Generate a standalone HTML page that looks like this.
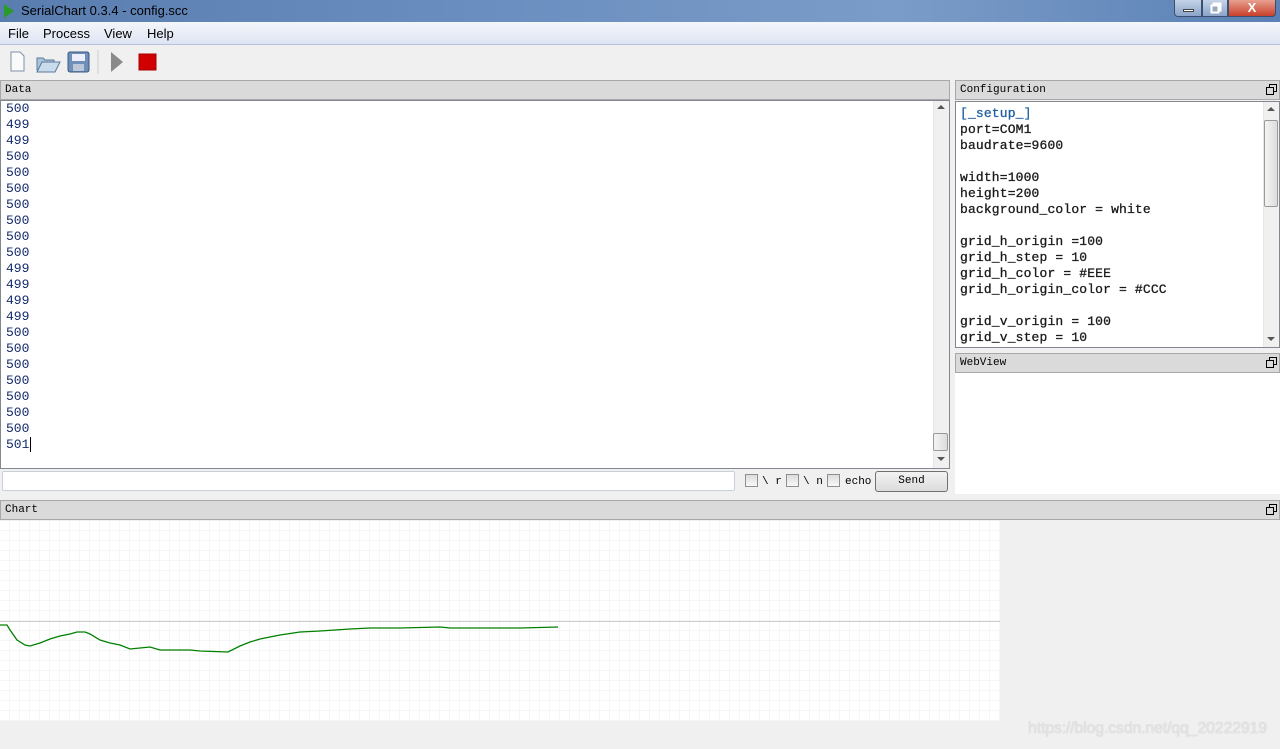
<!DOCTYPE html>
<html><head><meta charset="utf-8"><style>
*{margin:0;padding:0;box-sizing:border-box}
body{width:1280px;height:749px;overflow:hidden;background:#f0f0f0;font-family:"Liberation Sans",sans-serif;position:relative}
.abs{position:absolute}
.mono{font-family:"Liberation Mono",monospace;font-size:13px;line-height:16px}
.hdr{background:#dadada;border:1px solid #a8a8a8;font-family:"Liberation Mono",monospace;font-size:11px;line-height:18px;padding-left:4px;color:#000}
.sb{background:#f0f0f0;border-left:1px solid #e6e6e6}
.cb{width:13px;height:13px;border:1px solid #8f8f8f;background:linear-gradient(#ddd,#f8f8f8);position:absolute}
.fl{position:absolute;width:11px;height:11px}
</style></head><body>
<!-- title bar -->
<div class="abs" style="left:0;top:0;width:1280px;height:22px;background:linear-gradient(90deg,#5a7db0,#6b8fc0 40%,#7a9cc8 70%,#5a80b5)"></div>
<div class="abs" style="left:4px;top:4px;width:0;height:0;border-left:10px solid #2a9a2a;border-top:7px solid transparent;border-bottom:7px solid transparent"></div>
<div class="abs" style="left:21px;top:3px;font-size:13px;color:#000">SerialChart 0.3.4 - config.scc</div>
<div class="abs" style="left:1174px;top:0;width:28px;height:17px;border:1px solid #3b4f70;border-top:0;border-radius:0 0 0 4px;background:linear-gradient(#c5d3e8,#8aa3c8)"><div class="abs" style="left:8px;top:9px;width:11px;height:3px;background:#fff;border:1px solid #444"></div></div>
<div class="abs" style="left:1202px;top:0;width:26px;height:17px;border:1px solid #3b4f70;border-top:0;background:linear-gradient(#c5d3e8,#8aa3c8)">
<svg class="abs" style="left:7px;top:2px" width="12" height="12"><rect x="3.5" y="1.5" width="7" height="7" fill="none" stroke="#fff" stroke-width="2"/><rect x="1.5" y="3.5" width="7" height="7" fill="#9ab" stroke="#fff" stroke-width="2"/></svg></div>
<div class="abs" style="left:1228px;top:0;width:48px;height:17px;border:1px solid #3b4f70;border-top:0;border-radius:0 0 4px 0;background:linear-gradient(#e8a090,#c8402a);color:#fff;font-weight:bold;font-size:13px;text-align:center;line-height:15px">X</div>
<!-- menu -->
<div class="abs" style="left:0;top:22px;width:1280px;height:23px;background:linear-gradient(#f4f6fb,#dde4f2);border-bottom:1px solid #b8c2d8"></div>
<div class="abs" style="left:8px;top:26px;font-size:13px">File</div>
<div class="abs" style="left:43px;top:26px;font-size:13px">Process</div>
<div class="abs" style="left:104px;top:26px;font-size:13px">View</div>
<div class="abs" style="left:147px;top:26px;font-size:13px">Help</div>
<!-- toolbar -->
<svg class="abs" style="left:0;top:46px" width="170" height="32">
<path d="M11 6h9l4 4v15h-13z" fill="#fafafa" stroke="#8090a8"/>
<path d="M37 12h6l2 2h9v10h-17z" fill="#a9c4dc" stroke="#5a7a9a"/><path d="M37 26l5-10h18l-5 10z" fill="#c9dcec" stroke="#5a7a9a"/>
<rect x="68" y="6" width="21" height="20" rx="2" fill="#6d8fb8" stroke="#3c5a80"/><rect x="72" y="8" width="13" height="7" fill="#eef"/><rect x="73" y="18" width="11" height="7" fill="#bcc8d8"/>
<line x1="98" y1="4" x2="98" y2="28" stroke="#ccc"/>
<path d="M111 6l12 10-12 10z" fill="#8a8a8a"/>
<rect x="139" y="8" width="17" height="16" fill="#d00000" stroke="#a00"/>
</svg>
<!-- Data panel -->
<div class="abs hdr" style="left:0;top:80px;width:950px;height:20px">Data</div>
<div class="abs" style="left:0;top:100px;width:950px;height:369px;background:#fff;border:1px solid #828790"></div>
<div class="abs sb" style="left:933px;top:101px;width:16px;height:367px"></div>
<div class="abs" style="left:937px;top:105px;border-left:4px solid transparent;border-right:4px solid transparent;border-bottom:4px solid #555"></div>
<div class="abs" style="left:937px;top:457px;border-left:4px solid transparent;border-right:4px solid transparent;border-top:4px solid #555"></div>
<div class="abs" style="left:933px;top:433px;width:15px;height:18px;border:1px solid #999;border-radius:2px;background:linear-gradient(90deg,#f4f4f4,#dcdcdc)"></div>
<div class="abs mono" style="left:6px;top:101px;color:#102a6a">500<br>499<br>499<br>500<br>500<br>500<br>500<br>500<br>500<br>500<br>499<br>499<br>499<br>499<br>500<br>500<br>500<br>500<br>500<br>500<br>500<br>501<span style="border-left:1px solid #000;margin-left:1px"></span></div>
<!-- input row -->
<div class="abs" style="left:2px;top:471px;width:733px;height:20px;background:#fff;border:1px solid #c8d0dc;border-radius:2px"></div>
<div class="cb" style="left:745px;top:474px"></div><div class="abs mono" style="left:762px;top:474px;font-size:11px">\ r</div>
<div class="cb" style="left:786px;top:474px"></div><div class="abs mono" style="left:803px;top:474px;font-size:11px">\ n</div>
<div class="cb" style="left:827px;top:474px"></div><div class="abs mono" style="left:845px;top:474px;font-size:11px">echo</div>
<div class="abs" style="left:875px;top:471px;width:73px;height:21px;border:1px solid #707070;border-radius:3px;background:linear-gradient(#f2f2f2,#dcdcdc);text-align:center;font-family:'Liberation Mono',monospace;font-size:11px;line-height:19px">Send</div>
<!-- Config -->
<div class="abs hdr" style="left:955px;top:80px;width:325px;height:20px">Configuration</div>
<svg class="fl" style="left:1266px;top:84px"><rect x="3.5" y="0.5" width="7" height="7" fill="none" stroke="#000"/><rect x="0.5" y="3.5" width="7" height="7" fill="#dadada" stroke="#000"/></svg>
<div class="abs" style="left:955px;top:101px;width:325px;height:247px;background:#fff;border:1px solid #828790"></div>
<div class="abs sb" style="left:1263px;top:102px;width:16px;height:245px"></div>
<div class="abs" style="left:1264px;top:120px;width:14px;height:87px;border:1px solid #999;border-radius:2px;background:linear-gradient(90deg,#f4f4f4,#dcdcdc)"></div>
<div class="abs" style="left:1267px;top:107px;border-left:4px solid transparent;border-right:4px solid transparent;border-bottom:4px solid #555"></div>
<div class="abs" style="left:1267px;top:337px;border-left:4px solid transparent;border-right:4px solid transparent;border-top:4px solid #555"></div>
<div class="abs mono" style="left:960px;top:106px;color:#1a1a1a;white-space:pre;-webkit-text-stroke:0.3px #1a1a1a;letter-spacing:0.15px"><span style="color:#2060a0;-webkit-text-stroke:0.3px #2060a0">[_setup_]</span>
port=COM1
baudrate=9600

width=1000
height=200
background_color = white

grid_h_origin =100
grid_h_step = 10
grid_h_color = #EEE
grid_h_origin_color = #CCC

grid_v_origin = 100
grid_v_step = 10</div>
<div class="abs hdr" style="left:955px;top:353px;width:325px;height:20px">WebView</div>
<svg class="fl" style="left:1266px;top:357px"><rect x="3.5" y="0.5" width="7" height="7" fill="none" stroke="#000"/><rect x="0.5" y="3.5" width="7" height="7" fill="#dadada" stroke="#000"/></svg>
<div class="abs" style="left:955px;top:373px;width:325px;height:121px;background:#fff"></div>
<!-- Chart -->
<div class="abs hdr" style="left:0;top:500px;width:1280px;height:20px">Chart</div>
<svg class="fl" style="left:1266px;top:504px"><rect x="3.5" y="0.5" width="7" height="7" fill="none" stroke="#000"/><rect x="0.5" y="3.5" width="7" height="7" fill="#dadada" stroke="#000"/></svg>
<svg class="abs" style="left:0;top:521px" width="1000" height="200">
<defs><pattern id="g" width="10" height="10" patternUnits="userSpaceOnUse"><path d="M10 0V10M0 10H10" stroke="#eee" stroke-width="1" fill="none"/></pattern></defs>
<rect width="1000" height="200" fill="#fff"/><rect width="1000" height="200" fill="url(#g)"/>
<line x1="0" y1="100.5" x2="1000" y2="100.5" stroke="#ccc"/>
<polyline fill="none" stroke="#008000" stroke-width="1.3" points="0,104 7,104 10,109 17,119 25,124 30,125 40,122 50,118 60,115 70,113 77,111 85,111 90,113 100,119 110,122 120,124 130,128 140,127 150,126 160,129 170,129 180,129 190,129 200,130 228,131 240,125 250,121 260,118 280,114 300,111 320,110 350,108 370,107 400,107 440,106 450,107 520,107 558,106"/>
</svg>
<div class="abs" style="left:1028px;top:720px;font-size:16px;color:#e4e4e4;text-shadow:0 0 1px #bbb;letter-spacing:-0.2px">https://blog.csdn.net/qq_20222919</div>
</body></html>
